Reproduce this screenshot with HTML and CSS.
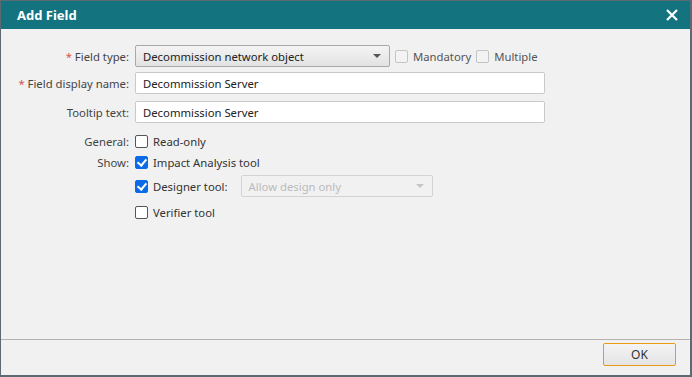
FILE: index.html
```html
<!DOCTYPE html>
<html lang="en">
<head>
    <meta charset="UTF-8">
    <title>Add Field</title>
    <link rel="stylesheet" href="styles.css">
</head>
<body>
    <div class="dialog">
        <div class="header">
            <h2>Add Field</h2>
            <svg class="close" width="12" height="12" viewBox="0 0 12 12">
                <path d="M1 1 L11 11 M11 1 L1 11" stroke="#fff" stroke-width="2.2" fill="none"/>
            </svg>
        </div>
        <div class="content">
            <div class="row row-type">
                <label class="lbl"><span class="req">*</span> Field type:</label>
                <div class="ctl">
                    <div class="select">
                        <span>Decommission network object</span>
                        <span class="arrow"></span>
                    </div>
                    <span class="check light"></span><span class="opt">Mandatory</span>
                    <span class="check light"></span><span class="opt">Multiple</span>
                </div>
            </div>
            <div class="row row-name">
                <label class="lbl"><span class="req">*</span> Field display name:</label>
                <div class="ctl"><div class="input">Decommission Server</div></div>
            </div>
            <div class="row row-tip">
                <label class="lbl">Tooltip text:</label>
                <div class="ctl"><div class="input">Decommission Server</div></div>
            </div>
            <div class="row row-general">
                <label class="lbl">General:</label>
                <div class="ctl"><span class="check"></span><span class="opt">Read-only</span></div>
            </div>
            <div class="row row-show">
                <label class="lbl">Show:</label>
                <div class="ctl"><span class="check on"></span><span class="opt">Impact Analysis tool</span></div>
            </div>
            <div class="row row-designer">
                <label class="lbl"></label>
                <div class="ctl">
                    <span class="check on"></span><span class="opt designer">Designer tool:</span>
                    <div class="select disabled">
                        <span>Allow design only</span>
                        <span class="arrow"></span>
                    </div>
                </div>
            </div>
            <div class="row row-verifier">
                <label class="lbl"></label>
                <div class="ctl"><span class="check"></span><span class="opt">Verifier tool</span></div>
            </div>
        </div>
        <div class="footer">
            <button class="ok">OK</button>
        </div>
    </div>
</body>
</html>
```

FILE: styles.css
```css
* {
    margin: 0;
    padding: 0;
    box-sizing: border-box;
    font-family: 'Noto Sans', 'Open Sans', sans-serif;
}

body {
    width: 692px;
    height: 377px;
    background: #f0f0f0;
}

.dialog {
    width: 692px;
    height: 377px;
    border: 1px solid #5e6a73;
    border-right-width: 2px;
    border-bottom-width: 2px;
    background: #f1f1f1;
    display: flex;
    flex-direction: column;
}

.header {
    height: 28px;
    background: #137480;
    display: flex;
    align-items: center;
    justify-content: space-between;
    padding: 0 12px 0 16px;
}

.header h2 {
    color: #fff;
    font-size: 13px;
    font-weight: bold;
}

.close {
    display: block;
}

.content {
    flex: 1;
    padding-top: 16px;
}

.row {
    display: grid;
    grid-template-columns: 128px auto;
    column-gap: 6px;
    align-items: center;
    font-size: 11.3px;
    color: #333;
}

.lbl {
    text-align: right;
    color: #444;
}

.req {
    color: #d9534f;
}

.ctl {
    display: flex;
    align-items: center;
}

.row-type { height: 22px; }
.row-name { height: 22px; margin-top: 5px; }
.row-tip { height: 22px; margin-top: 7px; }
.row-general { height: 16px; margin-top: 10px; }
.row-show { height: 16px; margin-top: 5px; }
.row-designer { height: 22px; margin-top: 5px; }
.row-verifier { height: 16px; margin-top: 7px; }

.select {
    width: 255px;
    height: 22px;
    border: 1px solid #a9a9a9;
    border-radius: 2px;
    background: linear-gradient(#f4f4f4, #e2e2e2);
    display: flex;
    align-items: center;
    justify-content: space-between;
    padding: 0 8px 0 7px;
    color: #222;
}

.select.disabled {
    width: 192px;
    height: 22px;
    margin-left: 13px;
    background: #f1f1f1;
    border-color: #d3d3d3;
    color: #bbb;
}

.arrow {
    width: 0;
    height: 0;
    border-left: 4px solid transparent;
    border-right: 4px solid transparent;
    border-top: 4px solid #555;
}

.select.disabled .arrow {
    border-top-color: #c5c5c5;
}

.input {
    width: 410px;
    height: 22px;
    border: 1px solid #c9c9c9;
    border-radius: 2px;
    background: #fff;
    padding: 0 7px;
    display: flex;
    align-items: center;
    color: #222;
}

.check {
    width: 13px;
    height: 13px;
    border: 1px solid #555;
    border-radius: 2px;
    background: #fff;
    flex: none;
    position: relative;
}

.check.light {
    border-color: #c5c5c5;
    background: #f3f3f3;
    margin-left: 5px;
}

.check.on {
    background: #0a6ae8;
    border-color: #0a6ae8;
}

.check.on::after {
    content: "";
    position: absolute;
    left: 3px;
    top: 0px;
    width: 4px;
    height: 7px;
    border-right: 2px solid #fff;
    border-bottom: 2px solid #fff;
    transform: rotate(40deg);
}

.opt {
    margin-left: 5px;
    color: #333;
}

.check.light + .opt {
    color: #555;
}

.footer {
    height: 36px;
    border-top: 1px solid #b3b3b3;
    display: flex;
    justify-content: flex-end;
    align-items: flex-start;
    padding: 3px 14px 0 0;
}

.ok {
    width: 73px;
    height: 23px;
    border: 1px solid #eb9a12;
    border-radius: 2px;
    background: linear-gradient(#f4f4f4, #e4e4e4);
    font-size: 12px;
    color: #333;
}
```
